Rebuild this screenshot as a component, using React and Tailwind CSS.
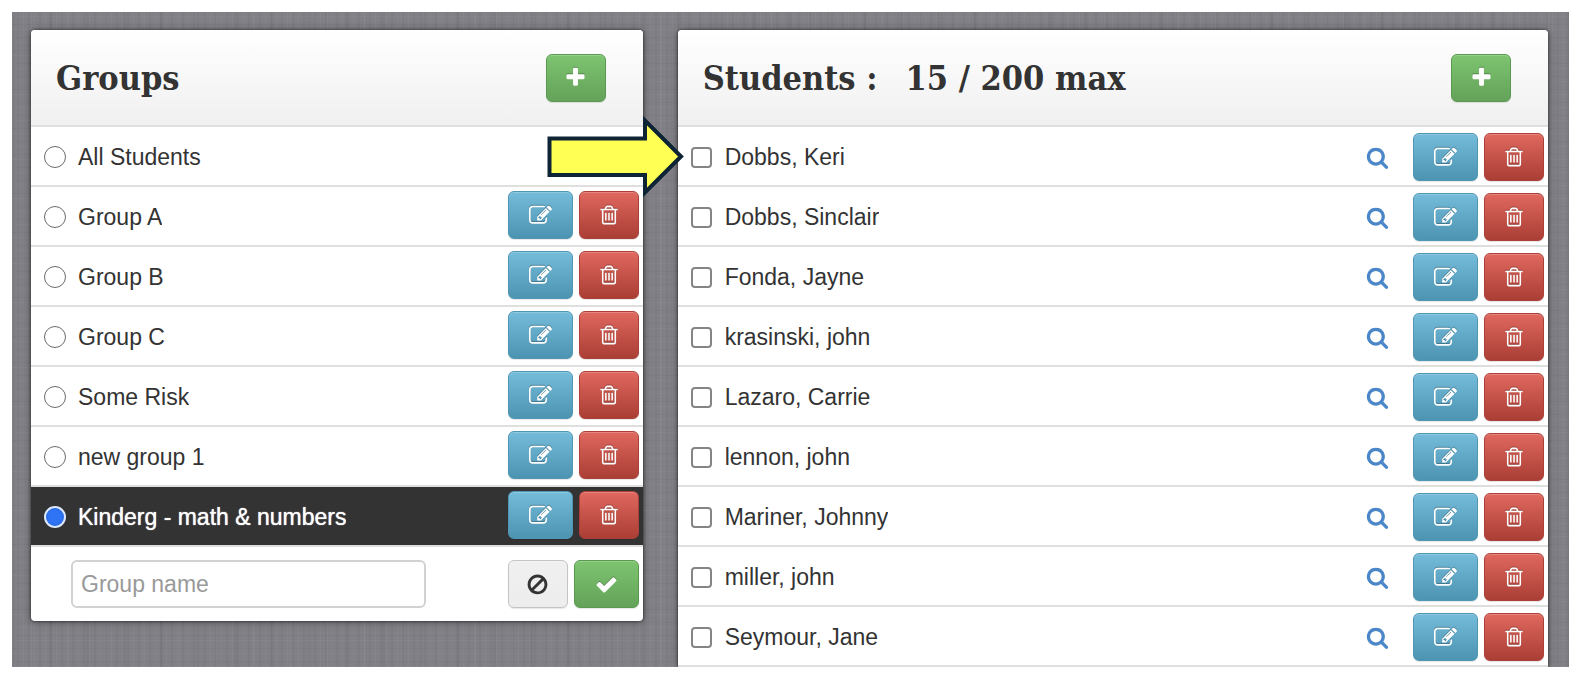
import { useState } from 'react'
import clsx from 'clsx'

const GROUPS = ['All Students', 'Group A', 'Group B', 'Group C', 'Some Risk', 'new group 1', 'Kinderg - math & numbers']

const STUDENTS = [
  'Dobbs, Keri',
  'Dobbs, Sinclair',
  'Fonda, Jayne',
  'krasinski, john',
  'Lazaro, Carrie',
  'lennon, john',
  'Mariner, Johnny',
  'miller, john',
  'Seymour, Jane',
]

const MAX_STUDENTS = 200
const ENROLLED = 15

const ICONS = {
  plus: 'M1600 736v192q0 40-28 68t-68 28h-416v416q0 40-28 68t-68 28h-192q-40 0-68-28t-28-68v-416h-416q-40 0-68-28t-28-68v-192q0-40 28-68t68-28h416v-416q0-40 28-68t68-28h192q40 0 68 28t28 68v416h416q40 0 68 28t28 68z',
  edit: 'M888 1184l116-116-152-152-116 116v56h96v96h56zm440-720q-16-16-33 1l-350 350q-17 17-1 33t33-1l350-350q17-17 1-33zm80 594v190q0 119-84.5 203.5t-203.5 84.5h-832q-119 0-203.5-84.5t-84.5-203.5v-832q0-119 84.5-203.5t203.5-84.5h832q63 0 117 25 15 7 18 23 3 17-9 29l-49 49q-14 14-32 8-23-6-45-6h-832q-66 0-113 47t-47 113v832q0 66 47 113t113 47h832q66 0 113-47t47-113v-126q0-13 9-22l64-64q15-15 35-7t20 29zm-96-738l288 288-672 672h-288v-288zm444 132l-92 92-288-288 92-92q28-28 68-28t68 28l152 152q28 28 28 68t-28 68z',
  trash: 'M704 736v576q0 14-9 23t-23 9h-64q-14 0-23-9t-9-23v-576q0-14 9-23t23-9h64q14 0 23 9t9 23zm256 0v576q0 14-9 23t-23 9h-64q-14 0-23-9t-9-23v-576q0-14 9-23t23-9h64q14 0 23 9t9 23zm256 0v576q0 14-9 23t-23 9h-64q-14 0-23-9t-9-23v-576q0-14 9-23t23-9h64q14 0 23 9t9 23zm128 724v-948h-896v948q0 22 7 40.5t14.5 27 10.5 8.5h832q3 0 10.5-8.5t14.5-27 7-40.5zm-672-1076h448l-48-117q-7-9-17-11h-317q-10 2-17 11zm928 32v64q0 14-9 23t-23 9h-96v948q0 83-47 143.5t-113 60.5h-832q-66 0-113-58.5t-47-141.5v-952h-96q-14 0-23-9t-9-23v-64q0-14 9-23t23-9h309l70-167q15-37 54-63t79-26h320q40 0 79 26t54 63l70 167h309q14 0 23 9t9 23z',
  search: 'M1216 832q0-185-131.5-316.5t-316.5-131.5-316.5 131.5-131.5 316.5 131.5 316.5 316.5 131.5 316.5-131.5 131.5-316.5zm512 832q0 52-38 90t-90 38q-54 0-90-38l-343-342q-179 124-399 124-143 0-273.5-55.5t-225-150-150-225-55.5-273.5 55.5-273.5 150-225 225-150 273.5-55.5 273.5 55.5 225 150 150 225 55.5 273.5q0 220-124 399l343 343q37 37 37 90z',
  ban: 'M1440 893q0-161-87-295l-754 753q137 89 297 89 111 0 211.5-43.5t173.5-116.5 116-174.5 43-212.5zm-999 299l755-754q-135-91-300-91-148 0-273 73t-198 199-73 274q0 162 89 299zm1223-299q0 157-61 300t-163.5 246-245 164-298.5 61-298.5-61-245-164-163.5-246-61-300 61-299.5 163.5-245.5 245-164 298.5-61 298.5 61 245 164 163.5 245.5 61 299.5z',
  check: 'M1671 566q0 40-28 68l-724 724-136 136q-28 28-68 28t-68-28l-136-136-362-362q-28-28-28-68t28-68l136-136q28-28 68-28t68 28l294 295 656-657q28-28 68-28t68 28l136 136q28 28 28 68z',
}

const TONES = {
  green: 'border-[#5a9a50] from-[#7dc470] to-[#64a259] text-white',
  blue: 'border-[#4f97b5] from-[#75bbda] to-[#4c94b2] text-white',
  red: 'border-[#ac4038] from-[#e0685f] to-[#aa3e35] text-white',
  plain: 'border-[#c4c4c4] from-[#f0f0f0] to-[#ededed] text-[#333]',
}

function Icon({ name, className }) {
  return (
    <svg viewBox="0 0 1792 1792" className={clsx('shrink-0', className)} fill="currentColor" aria-hidden="true">
      <path d={ICONS[name]} />
    </svg>
  )
}

function IconButton({ icon, tone, label, wide, onClick }) {
  return (
    <button
      type="button"
      aria-label={label}
      onClick={onClick}
      className={clsx(
        'flex h-12 shrink-0 items-center justify-center rounded-md border bg-linear-to-b shadow-[inset_0_1px_0_rgba(255,255,255,0.2),0_1px_1px_rgba(0,0,0,0.1)]',
        wide ? 'w-[65px]' : 'w-[60px]',
        TONES[tone],
      )}
    >
      <Icon
        name={icon}
        className={clsx(
          icon === 'trash' ? 'size-[22px]' : 'size-[23px]',
          tone !== 'plain' && 'drop-shadow-[0_-1px_0_rgba(0,0,0,0.25)]',
        )}
      />
    </button>
  )
}

function PanelHeader({ children, addLabel }) {
  return (
    <div className="flex h-[97px] items-center justify-between rounded-t border-b-2 border-[#dfdfdf] bg-linear-to-b from-white to-[#f0f0f0] pr-[37px] pl-[25px]">
      <h2 className="flex gap-7 font-['DejaVu_Serif_Condensed','DejaVu_Serif',serif] text-[34px] leading-none font-bold whitespace-nowrap text-[#333]">
        {children}
      </h2>
      <IconButton icon="plus" tone="green" label={addLabel} />
    </div>
  )
}

function Arrow() {
  return (
    <svg
      width="140"
      height="88"
      viewBox="0 0 140 88"
      className="pointer-events-none absolute top-[-14px] right-[-42px] z-10"
      aria-hidden="true"
    >
      <path d="M4.500 25.500H100V7.500L136 43.500L100 79.500V62H4.500Z" fill="#ffff54" stroke="#0e2434" strokeWidth="4" />
    </svg>
  )
}

export default function App() {
  const [group, setGroup] = useState('Kinderg - math & numbers')
  const [checked, setChecked] = useState([])
  const [name, setName] = useState('')

  const toggle = (s) => setChecked((c) => (c.includes(s) ? c.filter((x) => x !== s) : [...c, s]))

  return (
    <div className="min-h-screen bg-white py-3 pr-[13px] pl-3 font-['Liberation_Sans',Arial,sans-serif] text-[23px] leading-7 text-[#333]">
      <main className="grid grid-cols-12 items-start gap-x-[35px] overflow-hidden bg-[#818086] bg-[repeating-linear-gradient(90deg,rgba(255,255,255,0.03)_0_1px,transparent_1px_5px,rgba(0,0,0,0.03)_5px_7px,transparent_7px_11px),repeating-linear-gradient(0deg,rgba(255,255,255,0.03)_0_1px,transparent_1px_5px,rgba(0,0,0,0.03)_5px_6px,transparent_6px_13px),repeating-linear-gradient(90deg,rgba(0,0,0,0.03)_0_3px,transparent_3px_19px,rgba(255,255,255,0.04)_19px_20px,transparent_20px_37px)] pt-[18px] pr-[21px] pl-[19px]">
        {/* Groups */}
        <section className="col-span-5 rounded bg-white shadow-[0_0_3px_rgba(0,0,0,0.7),0_1px_10px_rgba(0,0,0,0.35)]">
          <PanelHeader addLabel="Add group">Groups</PanelHeader>
          <ul>
            {GROUPS.map((g, i) => (
              <li
                key={g}
                className={clsx(
                  'relative flex h-[60px] items-start gap-1.5 border-b-2 border-[#dfdfdf] pt-1 pr-1 pl-[13px]',
                  g === group && 'bg-[#333] text-white',
                )}
              >
                <label className="flex h-[52px] min-w-0 flex-1 items-center gap-3">
                  <input
                    type="radio"
                    name="group"
                    checked={g === group}
                    onChange={() => setGroup(g)}
                    className="size-[22px] shrink-0 appearance-none rounded-full border border-[#6b6b6b] bg-white checked:border-2 checked:border-[#dce8ff] checked:bg-[#2f74f5] checked:inset-shadow-[0_0_2px_#1450c0]"
                  />
                  <span className={clsx('truncate', g === group && '[text-shadow:0_0_1px_#fff]')}>{g}</span>
                </label>
                {i === 0 ? (
                  <Arrow />
                ) : (
                  <>
                    <IconButton icon="edit" tone="blue" label={`Edit ${g}`} wide />
                    <IconButton icon="trash" tone="red" label={`Delete ${g}`} />
                  </>
                )}
              </li>
            ))}
          </ul>
          <form className="flex items-center gap-1.5 py-[13px] pr-1 pl-10" onSubmit={(e) => e.preventDefault()}>
            <input
              type="text"
              aria-label="Group name"
              placeholder="Group name"
              value={name}
              onChange={(e) => setName(e.target.value)}
              className="h-12 w-[355px] min-w-0 rounded-md border-2 border-[#d2d2d2] bg-white px-2 placeholder:text-[#999]"
            />
            <div className="ml-auto flex gap-1.5">
              <IconButton icon="ban" tone="plain" label="Cancel" onClick={() => setName('')} />
              <IconButton icon="check" tone="green" label="Save group" wide />
            </div>
          </form>
        </section>

        {/* Students */}
        <section className="col-span-7 rounded-t bg-white shadow-[0_0_3px_rgba(0,0,0,0.7),0_1px_10px_rgba(0,0,0,0.35)]">
          <PanelHeader addLabel="Add student">
            <span>Students :</span>
            <span>
              {ENROLLED} / {MAX_STUDENTS} max
            </span>
          </PanelHeader>
          <ul>
            {STUDENTS.map((s) => (
              <li key={s} className="flex h-[60px] items-center gap-1.5 border-b-2 border-[#dfdfdf] pt-0.5 pr-1 pl-[13px]">
                <label className="flex min-w-0 flex-1 items-center gap-[13px]">
                  <input
                    type="checkbox"
                    checked={checked.includes(s)}
                    onChange={() => toggle(s)}
                    className="size-[21px] shrink-0 appearance-none rounded border-2 border-[#858585] bg-white checked:bg-[#2f74f5]"
                  />
                  <span className="truncate">{s}</span>
                </label>
                <button type="button" aria-label={`View ${s}`} className="mr-[18px] text-[#4a86c8]">
                  <Icon name="search" className="size-[23px]" />
                </button>
                <IconButton icon="edit" tone="blue" label={`Edit ${s}`} wide />
                <IconButton icon="trash" tone="red" label={`Delete ${s}`} />
              </li>
            ))}
          </ul>
        </section>
      </main>
    </div>
  )
}
